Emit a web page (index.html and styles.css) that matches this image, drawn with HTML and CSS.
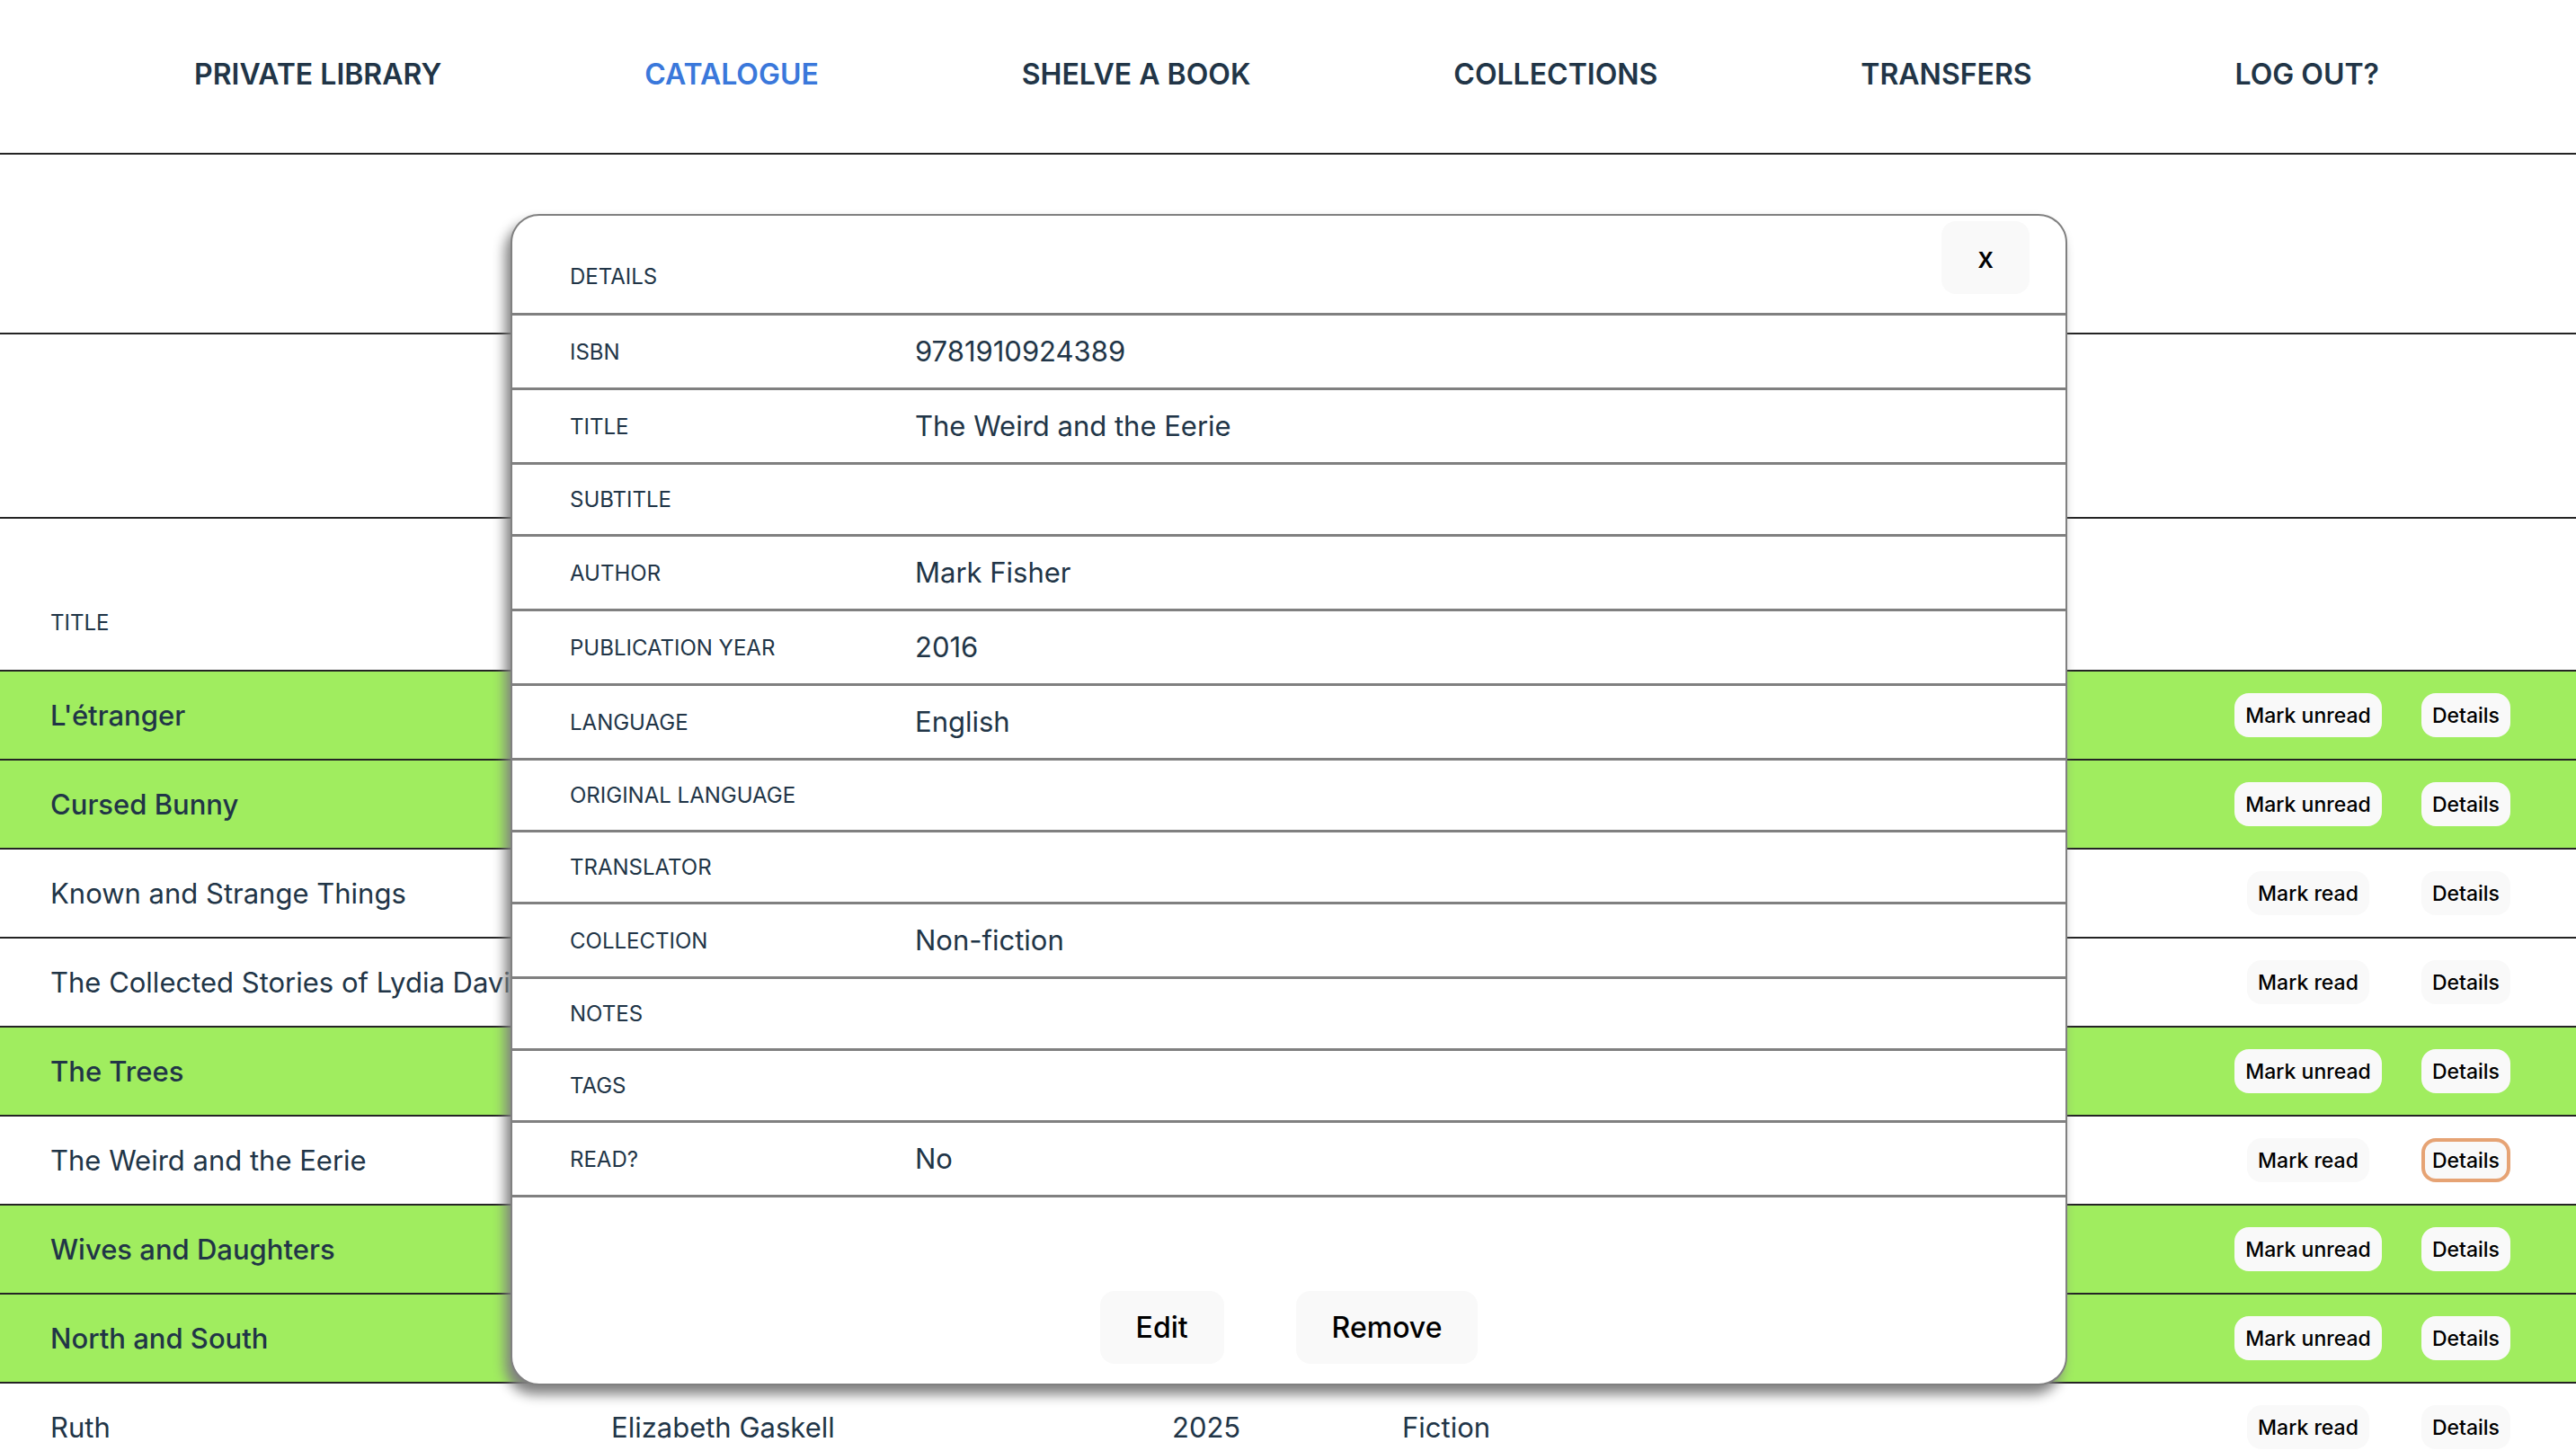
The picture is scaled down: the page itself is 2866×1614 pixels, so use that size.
FILE: index.html
```html
<!DOCTYPE html>
<html lang="en">
<head>
  <meta charset="utf-8">
  <meta name="viewport" content="width=device-width, initial-scale=1">
  <title>Private Library</title>
  <link rel="stylesheet" href="styles.css">
</head>
<body>
  <header class="site-header">
    <nav class="site-nav">
      <a href="#home">PRIVATE LIBRARY</a>
      <a href="#catalogue" class="active" aria-current="page">CATALOGUE</a>
      <a href="#shelve">SHELVE A BOOK</a>
      <a href="#collections">COLLECTIONS</a>
      <a href="#transfers">TRANSFERS</a>
      <a href="#logout">LOG OUT?</a>
    </nav>
  </header>

  <main>
    <section class="band band-heading"></section>
    <section class="band band-filters"></section>

    <table class="books">
      <colgroup>
        <col class="col-title">
        <col class="col-author">
        <col class="col-year">
        <col>
        <col class="col-mark">
        <col class="col-details">
      </colgroup>
      <thead>
        <tr><th scope="col">TITLE</th><th></th><th></th><th></th><th></th><th></th></tr>
      </thead>
      <tbody>
        <tr class="read">
          <td>L'étranger</td><td></td><td></td><td></td>
          <td class="mark"><button type="button" class="pill">Mark unread</button></td>
          <td class="details"><button type="button" class="pill">Details</button></td>
        </tr>
        <tr class="read">
          <td>Cursed Bunny</td><td></td><td></td><td></td>
          <td class="mark"><button type="button" class="pill">Mark unread</button></td>
          <td class="details"><button type="button" class="pill">Details</button></td>
        </tr>
        <tr>
          <td>Known and Strange Things</td><td></td><td></td><td></td>
          <td class="mark"><button type="button" class="pill">Mark read</button></td>
          <td class="details"><button type="button" class="pill">Details</button></td>
        </tr>
        <tr>
          <td>The Collected Stories of Lydia Davis</td><td></td><td></td><td></td>
          <td class="mark"><button type="button" class="pill">Mark read</button></td>
          <td class="details"><button type="button" class="pill">Details</button></td>
        </tr>
        <tr class="read">
          <td>The Trees</td><td></td><td></td><td></td>
          <td class="mark"><button type="button" class="pill">Mark unread</button></td>
          <td class="details"><button type="button" class="pill">Details</button></td>
        </tr>
        <tr>
          <td>The Weird and the Eerie</td><td></td><td></td><td></td>
          <td class="mark"><button type="button" class="pill">Mark read</button></td>
          <td class="details"><button type="button" class="pill selected">Details</button></td>
        </tr>
        <tr class="read">
          <td>Wives and Daughters</td><td></td><td></td><td></td>
          <td class="mark"><button type="button" class="pill">Mark unread</button></td>
          <td class="details"><button type="button" class="pill">Details</button></td>
        </tr>
        <tr class="read">
          <td>North and South</td><td></td><td></td><td></td>
          <td class="mark"><button type="button" class="pill">Mark unread</button></td>
          <td class="details"><button type="button" class="pill">Details</button></td>
        </tr>
        <tr>
          <td>Ruth</td><td>Elizabeth Gaskell</td><td>2025</td><td>Fiction</td>
          <td class="mark"><button type="button" class="pill">Mark read</button></td>
          <td class="details"><button type="button" class="pill">Details</button></td>
        </tr>
      </tbody>
    </table>
  </main>

  <div class="dialog" role="dialog" aria-modal="true" aria-labelledby="dialog-title">
    <div class="dialog-head">
      <h2 id="dialog-title">DETAILS</h2>
      <button type="button" class="button" aria-label="Close">x</button>
    </div>
    <dl class="fields">
      <div class="field"><dt>ISBN</dt><dd>9781910924389</dd></div>
      <div class="field"><dt>TITLE</dt><dd>The Weird and the Eerie</dd></div>
      <div class="field"><dt>SUBTITLE</dt><dd></dd></div>
      <div class="field"><dt>AUTHOR</dt><dd>Mark Fisher</dd></div>
      <div class="field"><dt>PUBLICATION YEAR</dt><dd>2016</dd></div>
      <div class="field"><dt>LANGUAGE</dt><dd>English</dd></div>
      <div class="field"><dt>ORIGINAL LANGUAGE</dt><dd></dd></div>
      <div class="field"><dt>TRANSLATOR</dt><dd></dd></div>
      <div class="field"><dt>COLLECTION</dt><dd>Non-fiction</dd></div>
      <div class="field"><dt>NOTES</dt><dd></dd></div>
      <div class="field"><dt>TAGS</dt><dd></dd></div>
      <div class="field"><dt>READ?</dt><dd>No</dd></div>
    </dl>
    <div class="dialog-actions">
      <button type="button" class="button">Edit</button>
      <button type="button" class="button">Remove</button>
    </div>
  </div>
</body>
</html>
```
FILE: styles.css
```css
:root {
  --text: #213547;
  --accent: #3a78db;
  --line: #242424;
  --dialog-line: #808080;
  --read: #a0ed5f;
  --button: #f9f9f9;
  --focus: #e6a374;
}

* {
  box-sizing: border-box;
}

/* The page behind does not scroll while the dialog is open */
body {
  margin: 0;
  height: 100vh;
  overflow: hidden;
  background: #fff;
  color: var(--text);
  font-family: Inter, "Liberation Sans", sans-serif;
  font-size: 31px;
  line-height: 42px;
}

/* Navigation */
.site-header {
  border-bottom: 2px solid var(--line);
}

.site-nav {
  display: flex;
  justify-content: space-between;
  padding: 63px 219px 67px 216px;
  font-size: 32px;
  font-weight: 600;
  line-height: 40px;
}

.site-nav a {
  color: var(--text);
  text-decoration: none;
}

.site-nav .active {
  color: var(--accent);
}

.band {
  border-bottom: 2px solid var(--line);
}

.band-heading {
  height: 200px;
}

.band-filters {
  height: 205px;
}

/* Catalogue table */
.books {
  width: 100%;
  table-layout: fixed;
  border-collapse: separate;
  border-spacing: 0;
}

.col-title,
.col-author {
  width: 624px;
}

.col-year {
  width: 256px;
}

.col-mark {
  width: 220px;
}

.col-details {
  width: 188px;
}

.books th {
  height: 170px;
  padding: 0 56px 33px;
  border-bottom: 2px solid var(--line);
  font-size: 24px;
  font-weight: 400;
  line-height: 39px;
  text-align: left;
  vertical-align: bottom;
}

.books td {
  height: 99px;
  padding: 0 0 0 56px;
  border-bottom: 2px solid var(--line);
  white-space: nowrap;
}

.books .mark {
  padding: 0;
  text-align: center;
}

.books .details {
  padding: 0 73px 0 0;
  text-align: right;
}

.read {
  background: var(--read);
  font-weight: 500;
}

/* Buttons */
button {
  border: 0;
  background: var(--button);
  color: #000;
  font-family: inherit;
  font-weight: 500;
  cursor: pointer;
}

.pill {
  display: inline-block;
  vertical-align: middle;
  height: 49px;
  padding: 1px 12px 0;
  border-radius: 16px;
  font-size: 23px;
  line-height: 48px;
}

.pill.selected {
  box-shadow: inset 0 0 0 4px var(--focus);
}

.button {
  height: 81px;
  padding: 0 40px;
  border-radius: 16px;
  font-size: 32px;
  line-height: 81px;
}

/* Book details dialog */
.dialog {
  position: absolute;
  top: 238px;
  left: 568px;
  right: 566px;
  border: 2px solid var(--dialog-line);
  border-radius: 32px;
  background: #fff;
  box-shadow: -6px 10px 14px gray;
}

.dialog-head {
  display: flex;
  justify-content: space-between;
  align-items: flex-start;
  padding: 6px 40px 21px 64px;
  border-bottom: 3px solid var(--dialog-line);
}

.dialog-head h2 {
  align-self: flex-end;
  margin: 0;
  font-size: 24px;
  font-weight: 400;
  line-height: 38px;
}

.fields {
  margin: 0;
}

.field {
  display: flex;
  align-items: center;
  padding: 19px 64px;
  border-bottom: 3px solid var(--dialog-line);
}

.field dt {
  flex: 0 0 384px;
  font-size: 24px;
  line-height: 39px;
}

.field dd {
  margin: 0;
}

.dialog-actions {
  display: flex;
  justify-content: center;
  gap: 80px;
  padding: 104px 0 22px;
}
```
